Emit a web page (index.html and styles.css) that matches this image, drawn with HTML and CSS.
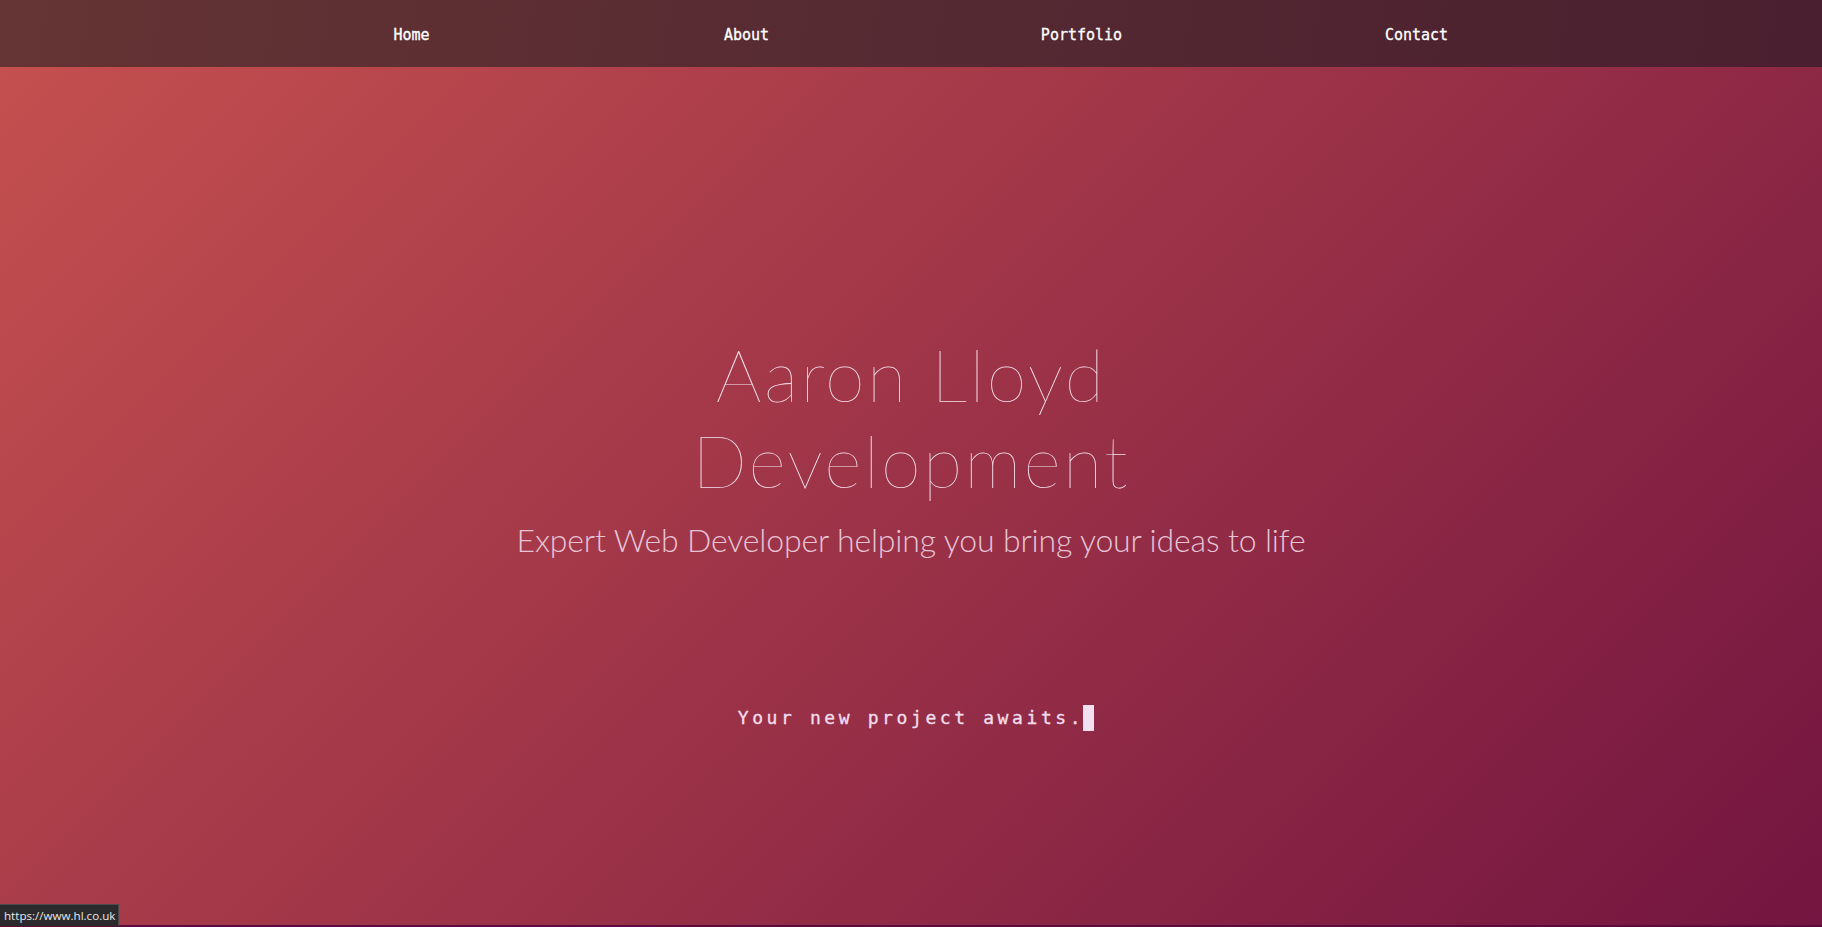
FILE: index.html
```html
<!DOCTYPE html>
<html lang="en">
<head>
<meta charset="utf-8">
<title>Aaron Lloyd Development</title>
<link rel="stylesheet" href="styles.css">
</head>
<body>
<div class="page">
  <header class="nav">
    <ul class="nav-list">
      <li><a href="#">Home</a></li>
      <li><a href="#">About</a></li>
      <li><a href="#">Portfolio</a></li>
      <li><a href="#">Contact</a></li>
    </ul>
  </header>
  <section class="hero">
    <h1 class="title">Aaron Lloyd<br>Development</h1>
    <p class="subtitle">Expert Web Developer helping you bring your ideas to life</p>
    <p class="typer">Your new project awaits.<span class="cursor"></span></p>
  </section>
  <div class="next"></div>
</div>
<div class="status">https://www.hl.co.uk</div>
</body>
</html>
```
FILE: styles.css
```css
html, body {
  margin: 0;
  padding: 0;
  height: 100%;
  overflow: hidden;
}
body {
  background: #5a0c40;
  font-family: "Lato", "Liberation Sans", sans-serif;
}
.page {
  background: linear-gradient(135deg, #c6514f 0%, #731540 100%);
  height: 925px;
  display: flex;
  flex-direction: column;
}
.nav {
  height: 67px;
  background: linear-gradient(100deg, #653434 0%, #552a32 50%, #4a1f2f 100%);
  display: flex;
  align-items: center;
}
.nav-list {
  list-style: none;
  margin: 0 auto;
  padding: 0;
  width: 1340px;
  display: grid;
  grid-template-columns: repeat(4, 1fr);
  transform: translateX(3px);
}
.nav-list li {
  text-align: center;
}
.nav-list a {
  color: #ffffff;
  text-decoration: none;
  font-family: "DejaVu Sans Mono", "Liberation Mono", monospace;
  font-size: 15px;
  font-weight: normal;
  -webkit-text-stroke: 0.3px #ffffff;
}
.hero {
  flex: 1;
  display: flex;
  flex-direction: column;
  align-items: center;
  padding-top: 264px;
  color: #f4dde9;
}
.title {
  margin: 0;
  font-family: "Lato", sans-serif;
  font-weight: 100;
  font-size: 72px;
  line-height: 86px;
  letter-spacing: 2.3px;
  text-align: center;
  color: #f6e2ee;
}
.subtitle {
  margin: 18px 0 0;
  font-family: "Lato", sans-serif;
  font-weight: 300;
  font-size: 32px;
  line-height: 38px;
  color: #e6c4d5;
  letter-spacing: -0.15px;
}
.typer {
  margin: 146px 0 0;
  font-family: "DejaVu Sans Mono", "Liberation Mono", monospace;
  font-weight: normal;
  font-size: 18px;
  line-height: 26px;
  letter-spacing: 3.6px;
  color: #f2dded;
  -webkit-text-stroke: 0.35px #f2dded;
  display: flex;
  align-items: center;
  transform: translateX(5px);
}
.cursor {
  display: inline-block;
  width: 11px;
  height: 26px;
  background: #f1e1f1;
  margin-left: -1px;
}
.next {
  height: 2px;
}
.status {
  position: fixed;
  left: 0;
  bottom: 1px;
  height: 21px;
  padding: 0 3px 0 4px;
  background: #2a2a2c;
  border-top: 1px solid #4a4a4a;
  border-right: 1px solid #4a4a4a;
  color: #e8e8e8;
  font-family: "Open Sans", "Noto Sans", sans-serif;
  font-size: 11.6px;
  line-height: 21px;
}
```
